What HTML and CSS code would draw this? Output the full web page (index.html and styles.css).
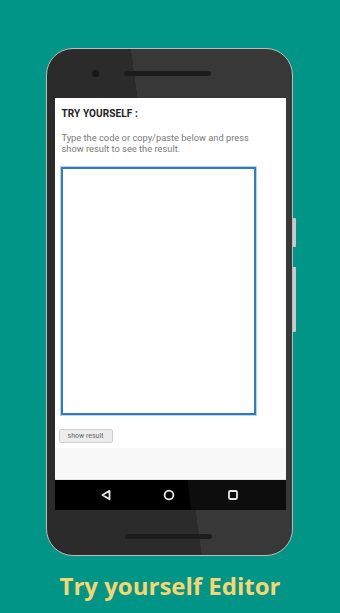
FILE: index.html
```html
<!DOCTYPE html>
<html>
<head>
<meta charset="utf-8">
<link rel="stylesheet" href="styles.css">
</head>
<body>
<div class="stage">
  <div class="phone">
    <span class="side-btn btn-a"></span>
    <span class="side-btn btn-b"></span>
    <div class="bezel-top">
      <span class="camera"></span>
      <span class="speaker"></span>
    </div>
    <div class="screen">
      <div class="content">
        <h1 class="title">TRY YOURSELF :</h1>
        <p class="desc">Type the code or copy/paste below and press<br>show result to see the result.</p>
        <div class="editor"></div>
        <button class="run">show result</button>
      </div>
      <div class="footer-area"></div>
      <div class="navbar">
        <svg class="nav-icon" width="12" height="12" viewBox="0 0 12 12"><path d="M9.5 1.8 L2.5 6 L9.5 10.2 Z" fill="none" stroke="#e8e8e8" stroke-width="1.8" stroke-linejoin="round"/></svg>
        <svg class="nav-icon" width="12" height="12" viewBox="0 0 12 12"><circle cx="6" cy="6" r="4.4" fill="none" stroke="#e8e8e8" stroke-width="1.8"/></svg>
        <svg class="nav-icon" width="12" height="12" viewBox="0 0 12 12"><rect x="2" y="2" width="8" height="8" rx="1.2" fill="none" stroke="#e8e8e8" stroke-width="1.8"/></svg>
      </div>
    </div>
    <div class="bezel-bottom">
      <span class="speaker"></span>
    </div>
  </div>
  <div class="caption">Try yourself Editor</div>
</div>
</body>
</html>
```

FILE: styles.css
```css
* { box-sizing: border-box; }
html, body { margin: 0; padding: 0; }
body {
  background: #019587;
  width: 340px;
  height: 613px;
  overflow: hidden;
  font-family: Roboto, "Liberation Sans", sans-serif;
}
.stage {
  display: flex;
  flex-direction: column;
  align-items: center;
  padding-top: 48px;
}
.phone {
  position: relative;
  width: 247px;
  height: 508px;
  margin-left: -1px;
  border: 1.5px solid #bdbdbd;
  border-radius: 27px;
  background: linear-gradient(82deg, #2b2b2b 0%, #2b2b2b 49%, #383838 49%, #383838 100%);
  display: flex;
  flex-direction: column;
  align-items: stretch;
}
.side-btn {
  position: absolute;
  right: -4px;
  width: 3px;
  background: #c9c9c9;
  border-radius: 0 1px 1px 0;
}
.btn-a { top: 169px; height: 29px; }
.btn-b { top: 218px; height: 65px; }
.bezel-top {
  height: 48.5px;
  display: flex;
  align-items: center;
  padding-left: 45px;
  gap: 25px;
}
.camera {
  width: 7px;
  height: 7px;
  border-radius: 50%;
  background: #171717;
}
.speaker {
  width: 87px;
  height: 5px;
  border-radius: 3px;
  background: #1c1c1c;
}
.screen {
  margin: 0 6.5px 0 7.5px;
  height: 412px;
  background: #fff;
  display: flex;
  flex-direction: column;
}
.content {
  flex: 1;
  padding: 10px 0 0 7px;
}
.title {
  margin: 0;
  font-size: 10px;
  font-weight: 700;
  color: #222;
  line-height: 12px;
  letter-spacing: 0.1px;
}
.desc {
  margin: 12px 0 0;
  font-size: 9.3px;
  line-height: 11px;
  color: #7a7a7a;
  white-space: nowrap;
}
.editor {
  margin: 13px 0 0 -1px;
  width: 195px;
  height: 248px;
  border: 2px solid #2f7cbf;
  box-shadow: 0 0 0 1px #b9d5ee;
  background: #fff;
}
.run {
  display: block;
  margin: 14px 0 0 -3px;
  width: 54px;
  height: 14px;
  padding: 0;
  font-family: Roboto, "Liberation Sans", sans-serif;
  font-size: 7px;
  color: #666;
  background: #ececec;
  border: 1px solid #d2d2d2;
  border-radius: 2px;
}
.footer-area {
  height: 32px;
  background: #f8f8f8;
  border-bottom: 1px solid #e6e6e6;
}
.navbar {
  height: 30px;
  background: linear-gradient(83deg, #000 0%, #000 58%, #0d0d0d 58%, #0d0d0d 100%);
  display: flex;
  align-items: center;
  justify-content: space-between;
  padding: 0 47px 0 45px;
}
.nav-icon { display: block; }
.bezel-bottom {
  flex: 1;
  display: flex;
  justify-content: center;
  padding-top: 24px;
  padding-right: 3px;
}
.caption {
  margin-top: 15px;
  font-family: "Open Sans", Lato, sans-serif;
  font-weight: 700;
  font-size: 24px;
  line-height: 30px;
  color: #f8d572;
  letter-spacing: 0;
}
```
